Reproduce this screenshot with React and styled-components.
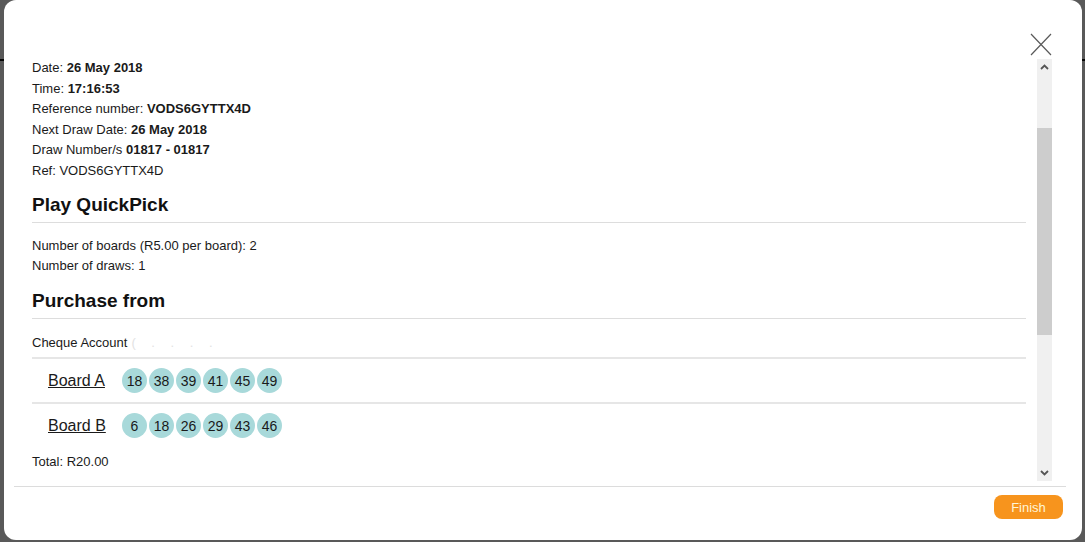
import styled, { createGlobalStyle } from "styled-components";

const GlobalStyle = createGlobalStyle`
  html, body {
    margin: 0;
    height: 100%;
    overflow: hidden;
  }
  body {
    background: #ffffff;
    font-family: "Liberation Sans", Arial, sans-serif;
    color: #1a1a1a;
  }
`;

const Page = styled.div`
  height: 542px;
  background: #ffffff;
`;
const PageHeader = styled.div`
  height: 59px;
  border-bottom: 2px solid #111111;
`;

const Overlay = styled.div`
  position: fixed;
  inset: 0;
  background: rgba(0, 0, 0, 0.65);
  display: flex;
  align-items: flex-start;
  padding-left: 4px;
`;
const Modal = styled.div`
  width: 1078px;
  height: 540px;
  background: #ffffff;
  border-radius: 12px;
  display: flex;
  flex-direction: column;
`;
const CloseRow = styled.div`
  height: 59px;
  box-sizing: border-box;
  padding: 33px 30px 0 0;
  display: flex;
  justify-content: flex-end;
  align-items: flex-start;
`;
const CloseButton = styled.button`
  border: 0;
  padding: 0;
  background: none;
  width: 22px;
  height: 23px;
  cursor: pointer;
  display: block;
`;
const Body = styled.div`
  margin: 0 30px 0 10px;
  height: 422px;
  display: flex;
`;
const Content = styled.div`
  flex: 1;
  overflow: hidden;
  margin-top: -1px;
  padding: 0 11px 0 18px;
  font-size: 13px;
`;
const ScrollBar = styled.div`
  width: 15px;
  background: #f0f0f0;
  display: flex;
  flex-direction: column;
`;
const ScrollButton = styled.div`
  height: 16px;
  display: flex;
  align-items: center;
  justify-content: center;
`;
const ScrollTrack = styled.div`
  flex: 1;
  padding-top: ${(p) => p.$offset}px;
`;
const ScrollThumb = styled.div`
  height: ${(p) => p.$size}px;
  background: #cdcdcd;
`;
const Line = styled.div`
  line-height: 20.6px;
  white-space: nowrap;
`;
const SectionTitle = styled.h2`
  margin: ${(p) => p.$top}px 0 0;
  font-size: 19px;
  line-height: 24px;
  font-weight: bold;
  color: #111111;
  padding-bottom: 5px;
  border-bottom: 1px solid #dddddd;
`;
const Group = styled.div`
  margin-top: ${(p) => p.$top}px;
`;
const Masked = styled.span`
  color: #e2e2e2;
  margin-left: 4px;
  letter-spacing: 6px;
`;
const Boards = styled.div`
  margin-top: 4px;
`;
const BoardRow = styled.div`
  height: 43px;
  border-top: 2px solid #e6e6e6;
  display: flex;
  align-items: center;
  padding-left: 16px;
  gap: 16px;
`;
const BoardName = styled.a`
  font-size: 16px;
  color: #1a1a1a;
  text-decoration: underline;
  width: 58px;
  white-space: nowrap;
`;
const Balls = styled.div`
  display: flex;
  gap: 2px;
`;
const Ball = styled.span`
  width: 25px;
  height: 25px;
  border-radius: 50%;
  background: #a8d9da;
  display: flex;
  align-items: center;
  justify-content: center;
  font-size: 14px;
  color: #1a1a1a;
`;
const Footer = styled.div`
  margin: 5px 16px 0 10px;
  border-top: 1px solid #dcdcdc;
  padding: 8px 3px 0 0;
  display: flex;
  justify-content: flex-end;
`;
const FinishButton = styled.button`
  width: 69px;
  height: 24px;
  border: 0;
  border-radius: 8px;
  background: #f7941d;
  color: #fff5d8;
  font-family: "Liberation Sans", Arial, sans-serif;
  font-size: 13px;
  cursor: pointer;
`;

const Chevron = ({ up }) => (
  <svg width="9" height="6" viewBox="0 0 9 6">
    <path
      d={up ? "M1 5 L4.5 1.5 L8 5" : "M1 1 L4.5 4.5 L8 1"}
      stroke="#555555"
      strokeWidth="1.8"
      fill="none"
    />
  </svg>
);

const boards = [
  { name: "Board A", numbers: [18, 38, 39, 41, 45, 49] },
  { name: "Board B", numbers: [6, 18, 26, 29, 43, 46] },
];

const App = () => {
  return (
    <>
      <GlobalStyle />
      <Page>
        <PageHeader />
      </Page>
      <Overlay>
        <Modal>
          <CloseRow>
            <CloseButton aria-label="Close">
              <svg width="22" height="23" viewBox="0 0 22 23">
                <path
                  d="M1 1 L21 22 M21 1 L1 22"
                  stroke="#5a5a5a"
                  strokeWidth="1.2"
                  fill="none"
                />
              </svg>
            </CloseButton>
          </CloseRow>
          <Body>
            <Content>
              <Line>
                Date: <b>26 May 2018</b>
              </Line>
              <Line>
                Time: <b>17:16:53</b>
              </Line>
              <Line>
                Reference number: <b>VODS6GYTTX4D</b>
              </Line>
              <Line>
                Next Draw Date: <b>26 May 2018</b>
              </Line>
              <Line>
                Draw Number/s <b>01817 - 01817</b>
              </Line>
              <Line>Ref: VODS6GYTTX4D</Line>

              <SectionTitle $top={11}>Play QuickPick</SectionTitle>
              <Group $top={13}>
                <Line>Number of boards (R5.00 per board): 2</Line>
                <Line>Number of draws: 1</Line>
              </Group>

              <SectionTitle $top={12}>Purchase from</SectionTitle>
              <Group $top={14}>
                <Line>
                  Cheque Account<Masked>( . . . .</Masked>
                </Line>
              </Group>

              <Boards>
                {boards.map((board) => (
                  <BoardRow key={board.name}>
                    <BoardName href="#">{board.name}</BoardName>
                    <Balls>
                      {board.numbers.map((n, i) => (
                        <Ball key={i}>{n}</Ball>
                      ))}
                    </Balls>
                  </BoardRow>
                ))}
              </Boards>
              <Group $top={5}>
                <Line>Total: R20.00</Line>
              </Group>
            </Content>
            <ScrollBar>
              <ScrollButton>
                <Chevron up />
              </ScrollButton>
              <ScrollTrack $offset={53}>
                <ScrollThumb $size={207} />
              </ScrollTrack>
              <ScrollButton>
                <Chevron />
              </ScrollButton>
            </ScrollBar>
          </Body>
          <Footer>
            <FinishButton>Finish</FinishButton>
          </Footer>
        </Modal>
      </Overlay>
    </>
  );
};

export default App;
